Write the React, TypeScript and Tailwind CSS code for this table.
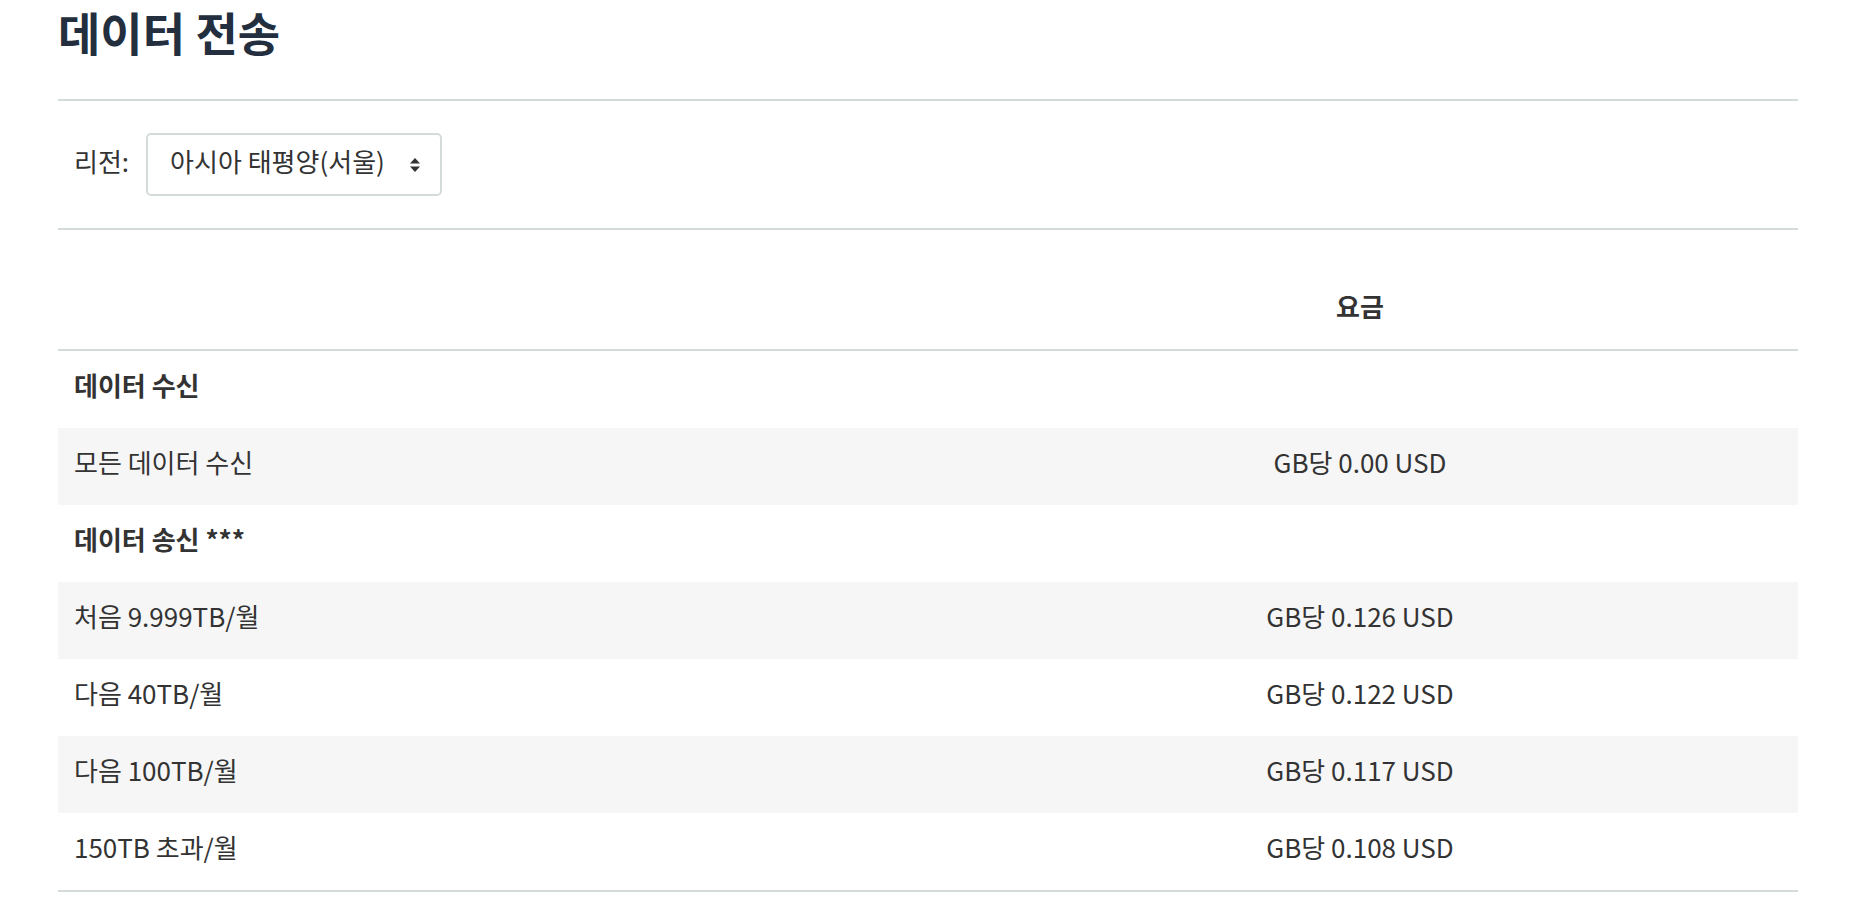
const rows: { label: string; price?: string; bold?: boolean; shaded?: boolean }[] = [
  { label: "데이터 수신", bold: true },
  { label: "모든 데이터 수신", price: "GB당 0.00 USD", shaded: true },
  { label: "데이터 송신 ***", bold: true },
  { label: "처음 9.999TB/월", price: "GB당 0.126 USD", shaded: true },
  { label: "다음 40TB/월", price: "GB당 0.122 USD" },
  { label: "다음 100TB/월", price: "GB당 0.117 USD", shaded: true },
  { label: "150TB 초과/월", price: "GB당 0.108 USD" },
];

function SortArrows() {
  return (
    <svg width="12" height="16" viewBox="0 0 12 16" className="shrink-0">
      <path d="M6 1 L11 6.5 L1 6.5 Z" fill="#333" />
      <path d="M1 9.5 L11 9.5 L6 15 Z" fill="#333" />
    </svg>
  );
}

export default function App() {
  return (
    <div
      className="min-h-screen bg-white text-[#333] pl-[58px] pr-[64px]"
      style={{ fontFamily: '"Noto Sans CJK KR", "Noto Sans", sans-serif' }}
    >
      <h1 className="text-[46px] font-bold leading-[62px] pb-[37px] text-[#232f3e] border-b-2 border-[#d5dbdb]">
        데이터 전송
      </h1>

      <div className="flex items-center py-[32px] pl-[16px] border-b-2 border-[#d5dbdb]">
        <span className="text-[26px] leading-[36px] mr-[17px] mb-[7px]">리전:</span>
        <div className="flex items-center justify-between w-[296px] h-[63px] pl-[22px] pr-[19px] border-2 border-[#d5dbdb] rounded-[5px]">
          <span className="text-[26px] leading-[36px] mb-[7px]">아시아 태평양(서울)</span>
          <SortArrows />
        </div>
      </div>

      <div className="border-b-2 border-[#d5dbdb]">
        <div className="grid grid-cols-2 h-[121px] items-end pb-[25px] border-b-2 border-[#d5dbdb]">
          <div />
          <div className="text-center text-[26px] leading-[36px] font-bold pr-[6px]">요금</div>
        </div>
        {rows.map((r) => (
          <div
            key={r.label}
            className={`grid grid-cols-2 h-[77px] items-center pb-[9px] text-[26px] leading-[36px] ${r.shaded ? "bg-[#f6f6f6]" : ""}`}
          >
            <div className={`pl-[16px] ${r.bold ? "font-bold" : ""}`}>{r.label}</div>
            <div className="text-center pr-[6px]">{r.price ?? ""}</div>
          </div>
        ))}
      </div>
    </div>
  );
}
